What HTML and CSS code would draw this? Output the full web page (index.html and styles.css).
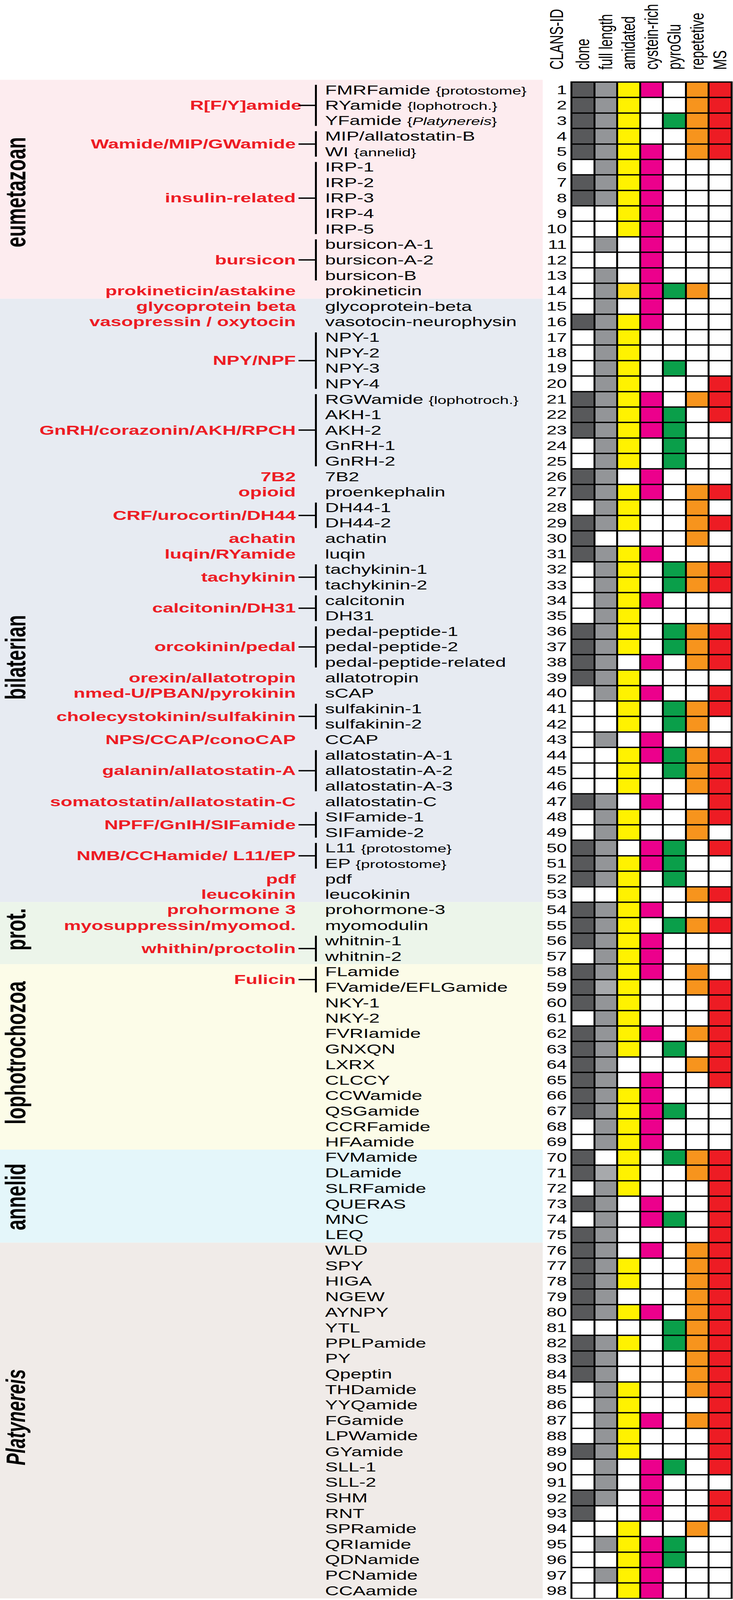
FILE: index.html
```html
<!DOCTYPE html>
<html lang="en">
<head>
<meta charset="utf-8">
<title>Neuropeptide families</title>
<link rel="stylesheet" href="styles.css">
</head>
<body>
<div class="page">
<div class="head">
  <div class="head-spacer"></div>
  <div class="hnum"><span class="vt">CLANS-ID</span></div>
  <div class="hcols">
    <div class="hcol"><span class="vt">clone</span></div>
    <div class="hcol"><span class="vt">full length</span></div>
    <div class="hcol"><span class="vt">amidated</span></div>
    <div class="hcol"><span class="vt">cystein-rich</span></div>
    <div class="hcol"><span class="vt">pyroGlu</span></div>
    <div class="hcol"><span class="vt">repetetive</span></div>
    <div class="hcol"><span class="vt">MS</span></div>
  </div>
</div>

<div class="main">
  <div class="left">
    <div class="band b-eu">
      <div class="group"><span>eumetazoan</span></div>
      <div class="fams">
        <div class="fam br"><div class="fl"><span class="over">R[F/Y]amide</span></div><div class="link"></div><div class="names">
          <div>FMRFamide <small class="an">{protostome}</small></div>
          <div>RYamide <small class="an">{lophotroch.}</small></div>
          <div>YFamide <small class="an">{<i>Platynereis</i>}</small></div>
        </div></div>
        <div class="fam br"><div class="fl">Wamide/MIP/GWamide</div><div class="link"></div><div class="names">
          <div>MIP/allatostatin-B</div>
          <div>WI <small class="an">{annelid}</small></div>
        </div></div>
        <div class="fam br"><div class="fl">insulin-related</div><div class="link"></div><div class="names">
          <div>IRP-1</div><div>IRP-2</div><div>IRP-3</div><div>IRP-4</div><div>IRP-5</div>
        </div></div>
        <div class="fam br"><div class="fl">bursicon</div><div class="link"></div><div class="names">
          <div>bursicon-A-1</div><div>bursicon-A-2</div><div>bursicon-B</div>
        </div></div>
        <div class="fam"><div class="fl">prokineticin/astakine</div><div class="link"></div><div class="names">
          <div>prokineticin</div>
        </div></div>
      </div>
    </div>

    <div class="band b-bi">
      <div class="group"><span>bilaterian</span></div>
      <div class="fams">
        <div class="fam"><div class="fl">glycoprotein beta</div><div class="link"></div><div class="names"><div>glycoprotein-beta</div></div></div>
        <div class="fam"><div class="fl">vasopressin / oxytocin</div><div class="link"></div><div class="names"><div>vasotocin-neurophysin</div></div></div>
        <div class="fam br"><div class="fl">NPY/NPF</div><div class="link"></div><div class="names">
          <div>NPY-1</div><div>NPY-2</div><div>NPY-3</div><div>NPY-4</div>
        </div></div>
        <div class="fam br"><div class="fl">GnRH/corazonin/AKH/RPCH</div><div class="link"></div><div class="names">
          <div>RGWamide <small class="an">{lophotroch.}</small></div><div>AKH-1</div><div>AKH-2</div><div>GnRH-1</div><div>GnRH-2</div>
        </div></div>
        <div class="fam"><div class="fl">7B2</div><div class="link"></div><div class="names"><div>7B2</div></div></div>
        <div class="fam"><div class="fl">opioid</div><div class="link"></div><div class="names"><div>proenkephalin</div></div></div>
        <div class="fam br"><div class="fl">CRF/urocortin/DH44</div><div class="link"></div><div class="names">
          <div>DH44-1</div><div>DH44-2</div>
        </div></div>
        <div class="fam"><div class="fl">achatin</div><div class="link"></div><div class="names"><div>achatin</div></div></div>
        <div class="fam"><div class="fl">luqin/RYamide</div><div class="link"></div><div class="names"><div>luqin</div></div></div>
        <div class="fam br"><div class="fl">tachykinin</div><div class="link"></div><div class="names">
          <div>tachykinin-1</div><div>tachykinin-2</div>
        </div></div>
        <div class="fam br"><div class="fl">calcitonin/DH31</div><div class="link"></div><div class="names">
          <div>calcitonin</div><div>DH31</div>
        </div></div>
        <div class="fam br"><div class="fl">orcokinin/pedal</div><div class="link"></div><div class="names">
          <div>pedal-peptide-1</div><div>pedal-peptide-2</div><div>pedal-peptide-related</div>
        </div></div>
        <div class="fam"><div class="fl">orexin/allatotropin</div><div class="link"></div><div class="names"><div>allatotropin</div></div></div>
        <div class="fam"><div class="fl">nmed-U/PBAN/pyrokinin</div><div class="link"></div><div class="names"><div>sCAP</div></div></div>
        <div class="fam br"><div class="fl">cholecystokinin/sulfakinin</div><div class="link"></div><div class="names">
          <div>sulfakinin-1</div><div>sulfakinin-2</div>
        </div></div>
        <div class="fam"><div class="fl">NPS/CCAP/conoCAP</div><div class="link"></div><div class="names"><div>CCAP</div></div></div>
        <div class="fam br"><div class="fl">galanin/allatostatin-A</div><div class="link"></div><div class="names">
          <div>allatostatin-A-1</div><div>allatostatin-A-2</div><div>allatostatin-A-3</div>
        </div></div>
        <div class="fam"><div class="fl">somatostatin/allatostatin-C</div><div class="link"></div><div class="names"><div>allatostatin-C</div></div></div>
        <div class="fam br"><div class="fl">NPFF/GnIH/SIFamide</div><div class="link"></div><div class="names">
          <div>SIFamide-1</div><div>SIFamide-2</div>
        </div></div>
        <div class="fam br"><div class="fl">NMB/CCHamide/ L11/EP</div><div class="link"></div><div class="names">
          <div>L11 <small class="an">{protostome}</small></div><div>EP <small class="an">{protostome}</small></div>
        </div></div>
        <div class="fam"><div class="fl">pdf</div><div class="link"></div><div class="names"><div>pdf</div></div></div>
        <div class="fam"><div class="fl">leucokinin</div><div class="link"></div><div class="names"><div>leucokinin</div></div></div>
      </div>
    </div>

    <div class="band b-pr">
      <div class="group"><span>prot.</span></div>
      <div class="fams">
        <div class="fam"><div class="fl">prohormone 3</div><div class="link"></div><div class="names"><div>prohormone-3</div></div></div>
        <div class="fam"><div class="fl">myosuppressin/myomod.</div><div class="link"></div><div class="names"><div>myomodulin</div></div></div>
        <div class="fam br"><div class="fl">whithin/proctolin</div><div class="link"></div><div class="names">
          <div>whitnin-1</div><div>whitnin-2</div>
        </div></div>
      </div>
    </div>

    <div class="band b-lo">
      <div class="group"><span>lophotrochozoa</span></div>
      <div class="fams">
        <div class="fam br"><div class="fl">Fulicin</div><div class="link"></div><div class="names">
          <div>FLamide</div><div>FVamide/EFLGamide</div>
        </div></div>
        <div class="fam"><div class="fl"></div><div class="link"></div><div class="names">
          <div>NKY-1</div><div>NKY-2</div><div>FVRIamide</div><div>GNXQN</div><div>LXRX</div><div>CLCCY</div><div>CCWamide</div><div>QSGamide</div><div>CCRFamide</div><div>HFAamide</div>
        </div></div>
      </div>
    </div>

    <div class="band b-an">
      <div class="group"><span>annelid</span></div>
      <div class="fams">
        <div class="fam"><div class="fl"></div><div class="link"></div><div class="names">
          <div>FVMamide</div><div>DLamide</div><div>SLRFamide</div><div>QUERAS</div><div>MNC</div><div>LEQ</div>
        </div></div>
      </div>
    </div>

    <div class="band b-pl">
      <div class="group"><span class="it">Platynereis</span></div>
      <div class="fams">
        <div class="fam"><div class="fl"></div><div class="link"></div><div class="names">
          <div>WLD</div><div>SPY</div><div>HIGA</div><div>NGEW</div><div>AYNPY</div><div>YTL</div><div>PPLPamide</div><div>PY</div><div>Qpeptin</div><div>THDamide</div><div>YYQamide</div><div>FGamide</div><div>LPWamide</div><div>GYamide</div><div>SLL-1</div><div>SLL-2</div><div>SHM</div><div>RNT</div><div>SPRamide</div><div>QRIamide</div><div>QDNamide</div><div>PCNamide</div><div>CCAamide</div>
        </div></div>
      </div>
    </div>
  </div>

  <div class="right">
    <div class="nums">
      <div>1</div><div>2</div><div>3</div><div>4</div><div>5</div><div>6</div><div>7</div><div>8</div><div>9</div><div>10</div>
      <div>11</div><div>12</div><div>13</div><div>14</div><div>15</div><div>16</div><div>17</div><div>18</div><div>19</div><div>20</div>
      <div>21</div><div>22</div><div>23</div><div>24</div><div>25</div><div>26</div><div>27</div><div>28</div><div>29</div><div>30</div>
      <div>31</div><div>32</div><div>33</div><div>34</div><div>35</div><div>36</div><div>37</div><div>38</div><div>39</div><div>40</div>
      <div>41</div><div>42</div><div>43</div><div>44</div><div>45</div><div>46</div><div>47</div><div>48</div><div>49</div><div>50</div>
      <div>51</div><div>52</div><div>53</div><div>54</div><div>55</div><div>56</div><div>57</div><div>58</div><div>59</div><div>60</div>
      <div>61</div><div>62</div><div>63</div><div>64</div><div>65</div><div>66</div><div>67</div><div>68</div><div>69</div><div>70</div>
      <div>71</div><div>72</div><div>73</div><div>74</div><div>75</div><div>76</div><div>77</div><div>78</div><div>79</div><div>80</div>
      <div>81</div><div>82</div><div>83</div><div>84</div><div>85</div><div>86</div><div>87</div><div>88</div><div>89</div><div>90</div>
      <div>91</div><div>92</div><div>93</div><div>94</div><div>95</div><div>96</div><div>97</div><div>98</div>
    </div>
    <div class="grid">
<i class="d"></i><i class="g"></i><i class="y"></i><i class="m"></i><i></i><i class="o"></i><i class="r"></i>
<i class="d"></i><i class="g"></i><i class="y"></i><i></i><i></i><i class="o"></i><i class="r"></i>
<i class="d"></i><i class="g"></i><i class="y"></i><i></i><i class="n"></i><i class="o"></i><i class="r"></i>
<i class="d"></i><i class="g"></i><i class="y"></i><i></i><i></i><i class="o"></i><i class="r"></i>
<i class="d"></i><i class="g"></i><i class="y"></i><i class="m"></i><i></i><i class="o"></i><i class="r"></i>
<i></i><i class="g"></i><i class="y"></i><i class="m"></i><i></i><i></i><i></i>
<i class="d"></i><i class="g"></i><i class="y"></i><i class="m"></i><i></i><i></i><i></i>
<i class="d"></i><i class="g"></i><i class="y"></i><i class="m"></i><i></i><i></i><i></i>
<i></i><i></i><i class="y"></i><i class="m"></i><i></i><i></i><i></i>
<i></i><i></i><i class="y"></i><i class="m"></i><i></i><i></i><i></i>
<i></i><i class="g"></i><i></i><i class="m"></i><i></i><i></i><i></i>
<i></i><i></i><i></i><i class="m"></i><i></i><i></i><i></i>
<i></i><i class="g"></i><i></i><i class="m"></i><i></i><i></i><i></i>
<i></i><i class="g"></i><i class="y2"></i><i class="m"></i><i class="n"></i><i class="o"></i><i></i>
<i></i><i class="g"></i><i></i><i class="m"></i><i></i><i></i><i></i>
<i class="d"></i><i class="g"></i><i class="y"></i><i class="m"></i><i></i><i></i><i></i>
<i></i><i class="g"></i><i class="y"></i><i></i><i></i><i></i><i></i>
<i></i><i class="g"></i><i class="y"></i><i></i><i></i><i></i><i></i>
<i></i><i class="g"></i><i class="y"></i><i></i><i class="n"></i><i></i><i></i>
<i></i><i class="g"></i><i class="y"></i><i></i><i></i><i></i><i class="r"></i>
<i class="d"></i><i class="g"></i><i class="y"></i><i class="m"></i><i></i><i class="o"></i><i class="r"></i>
<i class="d"></i><i class="g"></i><i class="y"></i><i class="m"></i><i class="n"></i><i></i><i class="r"></i>
<i class="d"></i><i class="g"></i><i class="y"></i><i class="m"></i><i class="n"></i><i></i><i></i>
<i></i><i class="g"></i><i class="y"></i><i></i><i class="n"></i><i></i><i></i>
<i></i><i class="g"></i><i class="y"></i><i></i><i class="n"></i><i></i><i></i>
<i class="d"></i><i class="g"></i><i></i><i class="m"></i><i></i><i></i><i></i>
<i class="d"></i><i class="g"></i><i class="y"></i><i class="m"></i><i></i><i class="o"></i><i class="r"></i>
<i></i><i class="g"></i><i class="y"></i><i></i><i></i><i class="o"></i><i></i>
<i class="d"></i><i class="g"></i><i class="y"></i><i></i><i></i><i class="o"></i><i class="r"></i>
<i class="d"></i><i></i><i></i><i></i><i></i><i class="o"></i><i></i>
<i class="d"></i><i class="g"></i><i class="y"></i><i class="m"></i><i></i><i></i><i></i>
<i></i><i class="g"></i><i class="y"></i><i></i><i class="n"></i><i class="o"></i><i class="r"></i>
<i></i><i class="g"></i><i class="y"></i><i></i><i class="n"></i><i class="o"></i><i class="r"></i>
<i></i><i class="g"></i><i class="y"></i><i class="m"></i><i></i><i></i><i></i>
<i></i><i class="g"></i><i class="y"></i><i></i><i></i><i></i><i></i>
<i class="d"></i><i class="g"></i><i class="y"></i><i></i><i class="n"></i><i class="o"></i><i class="r"></i>
<i class="d"></i><i class="g"></i><i class="y"></i><i></i><i class="n"></i><i class="o"></i><i class="r"></i>
<i class="d"></i><i class="g"></i><i></i><i class="m"></i><i></i><i class="o"></i><i class="r"></i>
<i class="d"></i><i class="g"></i><i class="y"></i><i></i><i></i><i></i><i></i>
<i></i><i class="g"></i><i class="y"></i><i class="m"></i><i></i><i></i><i class="r"></i>
<i></i><i></i><i class="y"></i><i></i><i class="n"></i><i class="o"></i><i class="r"></i>
<i></i><i></i><i class="y"></i><i></i><i class="n"></i><i class="o"></i><i></i>
<i></i><i class="g"></i><i></i><i class="m"></i><i></i><i></i><i></i>
<i></i><i></i><i class="y"></i><i class="m"></i><i class="n"></i><i class="o"></i><i class="r"></i>
<i></i><i></i><i class="y"></i><i></i><i class="n"></i><i class="o"></i><i class="r"></i>
<i></i><i></i><i class="y"></i><i></i><i></i><i class="o"></i><i class="r"></i>
<i class="d"></i><i class="g"></i><i></i><i class="m"></i><i></i><i></i><i class="r"></i>
<i></i><i class="g"></i><i class="y"></i><i></i><i></i><i class="o"></i><i class="r"></i>
<i></i><i class="g"></i><i class="y"></i><i></i><i></i><i class="o"></i><i></i>
<i class="d"></i><i class="g"></i><i></i><i class="m"></i><i class="n"></i><i></i><i class="r"></i>
<i class="d"></i><i class="g"></i><i class="y"></i><i class="m"></i><i class="n"></i><i></i><i></i>
<i class="d"></i><i class="g"></i><i class="y"></i><i></i><i class="n"></i><i></i><i></i>
<i></i><i></i><i class="y"></i><i></i><i></i><i class="o"></i><i class="r"></i>
<i class="d"></i><i class="g"></i><i class="y"></i><i class="m"></i><i></i><i></i><i></i>
<i class="d"></i><i class="g"></i><i class="y"></i><i></i><i class="n"></i><i class="o"></i><i class="r"></i>
<i class="d"></i><i class="g"></i><i class="y"></i><i class="m"></i><i></i><i></i><i></i>
<i></i><i class="g"></i><i class="y"></i><i class="m"></i><i></i><i></i><i></i>
<i class="d"></i><i class="g"></i><i class="y"></i><i class="m"></i><i></i><i class="o"></i><i></i>
<i class="d"></i><i class="g2"></i><i class="y"></i><i></i><i></i><i class="o"></i><i class="r"></i>
<i class="d"></i><i class="g"></i><i class="y"></i><i></i><i></i><i></i><i class="r"></i>
<i></i><i class="g"></i><i class="y"></i><i></i><i></i><i></i><i class="r"></i>
<i class="d"></i><i class="g"></i><i class="y"></i><i class="m"></i><i></i><i class="o"></i><i class="r"></i>
<i class="d"></i><i class="g"></i><i class="y"></i><i></i><i class="n"></i><i></i><i class="r"></i>
<i class="d"></i><i class="g"></i><i></i><i></i><i></i><i class="o"></i><i class="r"></i>
<i class="d"></i><i class="g"></i><i></i><i class="m"></i><i></i><i></i><i class="r"></i>
<i class="d"></i><i class="g"></i><i class="y"></i><i class="m"></i><i></i><i></i><i></i>
<i class="d"></i><i class="g"></i><i class="y"></i><i class="m"></i><i class="n"></i><i></i><i></i>
<i></i><i class="g"></i><i class="y"></i><i class="m"></i><i></i><i></i><i></i>
<i></i><i class="g"></i><i class="y"></i><i class="m"></i><i></i><i></i><i></i>
<i class="d"></i><i></i><i class="y"></i><i></i><i class="n"></i><i class="o"></i><i class="r"></i>
<i class="d"></i><i class="g2"></i><i class="y"></i><i></i><i></i><i class="o"></i><i class="r"></i>
<i></i><i class="g"></i><i class="y"></i><i></i><i></i><i></i><i class="r"></i>
<i class="d"></i><i class="g"></i><i></i><i class="m"></i><i></i><i></i><i class="r"></i>
<i></i><i class="g"></i><i></i><i class="m"></i><i class="n"></i><i></i><i class="r"></i>
<i class="d"></i><i class="g"></i><i></i><i></i><i></i><i></i><i class="r"></i>
<i class="d"></i><i class="g"></i><i></i><i class="m"></i><i></i><i class="o"></i><i class="r"></i>
<i class="d"></i><i class="g"></i><i class="y"></i><i></i><i></i><i class="o"></i><i class="r"></i>
<i class="d"></i><i class="g"></i><i class="y"></i><i></i><i></i><i class="o"></i><i class="r"></i>
<i class="d"></i><i class="g"></i><i></i><i></i><i></i><i class="o"></i><i class="r"></i>
<i class="d"></i><i class="g"></i><i class="y"></i><i class="m"></i><i></i><i class="o"></i><i class="r"></i>
<i></i><i></i><i></i><i></i><i class="n"></i><i class="o"></i><i class="r"></i>
<i class="d"></i><i class="g"></i><i class="y"></i><i></i><i class="n"></i><i class="o"></i><i class="r"></i>
<i class="d"></i><i class="g"></i><i></i><i></i><i></i><i class="o"></i><i class="r"></i>
<i class="d"></i><i class="g"></i><i></i><i></i><i></i><i class="o"></i><i class="r"></i>
<i></i><i class="g"></i><i class="y"></i><i></i><i></i><i class="o"></i><i class="r"></i>
<i></i><i class="g"></i><i class="y"></i><i></i><i></i><i></i><i class="r"></i>
<i></i><i class="g"></i><i class="y"></i><i class="m"></i><i></i><i class="o"></i><i class="r"></i>
<i></i><i class="g"></i><i class="y"></i><i></i><i></i><i></i><i class="r"></i>
<i class="d"></i><i class="g"></i><i class="y"></i><i></i><i></i><i></i><i class="r"></i>
<i></i><i class="g"></i><i></i><i class="m"></i><i class="n"></i><i></i><i class="r"></i>
<i></i><i class="g"></i><i></i><i class="m"></i><i></i><i></i><i></i>
<i class="d"></i><i class="g"></i><i></i><i class="m"></i><i></i><i></i><i class="r"></i>
<i class="d"></i><i></i><i></i><i class="m"></i><i></i><i></i><i class="r"></i>
<i></i><i></i><i class="y"></i><i></i><i></i><i class="o"></i><i></i>
<i></i><i class="g"></i><i class="y"></i><i class="m"></i><i class="n"></i><i></i><i></i>
<i></i><i></i><i class="y"></i><i class="m"></i><i class="n"></i><i></i><i></i>
<i></i><i class="g"></i><i class="y"></i><i class="m"></i><i></i><i></i><i></i>
<i></i><i></i><i class="y"></i><i class="m"></i><i></i><i></i><i></i>
    </div>
  </div>
</div>
</div>
<script src="fit.js"></script>
</body>
</html>
```

FILE: styles.css
```css
html {
  overflow: hidden;
  background: #ffffff;
}

html, body {
  margin: 0;
  padding: 0;
}

/* The figure is drawn at 1876 x 6036; --fit (set by fit.js from the
   window height) squeezes it vertically when the window is shorter. */
body {
  width: 1876px;
  height: calc(6032px * var(--fit, 1));
  overflow: hidden;
  background: #ffffff;
}

.page {
  width: 1876px;
  height: 6032px;
  overflow: hidden;
  color: #000000;
  font-family: "Liberation Sans", Arial, sans-serif;
  transform: scaleY(var(--fit, 1));
  transform-origin: 0 0;
}

/* ---------- header with rotated column titles ---------- */
.head {
  display: flex;
  height: 301px;
}

.head-spacer {
  width: 1389px;
  flex: none;
}

.hnum,
.hcol {
  display: flex;
  justify-content: center;
  align-items: flex-end;
  height: 301px;
  padding-bottom: 38px;
  box-sizing: border-box;
  flex: none;
}

.hnum {
  width: 71px;
}

.hcols {
  display: flex;
  padding-left: 2.5px;
}

.hcol {
  width: 58.5px;
}

.vt {
  writing-mode: vertical-rl;
  transform: rotate(180deg);
  font-size: 49px;
  line-height: 49px;
  white-space: nowrap;
}

/* ---------- main body ---------- */
.main {
  display: flex;
  align-items: flex-start;
}

.left {
  width: 1389px;
  flex: none;
}

.band {
  display: flex;
}

.b-eu { background: #fdecef; padding-top: 8.5px; }
.b-bi { background: #e7ebf2; }
.b-pr { background: #ecf5ea; }
.b-lo { background: #fcfce8; }
.b-an { background: #e4f6fa; }
.b-pl { background: #f0ebe8; }

.group {
  width: 100px;
  flex: none;
  display: flex;
  flex-direction: column;
  justify-content: flex-end;
  align-items: flex-start;
  padding-left: 4px;
  box-sizing: border-box;
}

.group span {
  writing-mode: vertical-rl;
  transform: rotate(180deg);
  font-size: 72px;
  line-height: 72px;
  font-weight: bold;
  white-space: nowrap;
}

.group .it {
  font-style: italic;
  font-size: 68px;
}

.b-eu .group { padding-bottom: 194px; }
.b-bi .group { padding-bottom: 763px; }
.b-pr .group { padding-bottom: 51px; }
.b-lo .group { padding-bottom: 95px; }
.b-an .group { padding-bottom: 47px; }
.b-pl .group { padding-bottom: 502px; }

.fams {
  flex: 1;
}

.fam {
  display: flex;
  align-items: center;
}

.fl {
  width: 657px;
  flex: none;
  text-align: right;
  color: #ed1c24;
  font-weight: bold;
  font-size: 49px;
  line-height: 58.375px;
  white-space: nowrap;
}

.fl .over {
  display: inline-block;
  margin-right: -15px;
}

.link {
  width: 42px;
  height: 5px;
  margin-left: 7px;
  flex: none;
}

.br .link {
  background: #000000;
}

.names {
  position: relative;
  padding-left: 26px;
  font-size: 49px;
}

.br .names::before {
  content: "";
  position: absolute;
  left: 0;
  top: 10px;
  bottom: 10px;
  width: 5px;
  background: #000000;
}

.names div {
  height: 58.375px;
  line-height: 58.375px;
  white-space: nowrap;
}

.an {
  font-size: 41px;
}

/* ---------- numbers and the property grid ---------- */
.right {
  display: flex;
  align-items: flex-start;
}

.nums {
  width: 71px;
  flex: none;
  padding-top: 8.5px;
  box-sizing: border-box;
}

.nums div {
  height: 58.375px;
  line-height: 58.375px;
  text-align: right;
  padding-right: 9px;
  font-size: 47px;
}

.grid {
  margin-top: 6px;
  display: grid;
  grid-template-columns: repeat(7, 53.5px);
  grid-auto-rows: 53.375px;
  gap: 5px;
  padding: 5px;
  background: #000000;
}

.grid i {
  display: block;
  background: #ffffff;
}

.grid .d  { background: #58595b; }
.grid .g  { background: #939598; }
.grid .g2 { background: #a7a9ac; }
.grid .y  { background: #fff200; }
.grid .y2 { background: #ffde17; }
.grid .m  { background: #ec008c; }
.grid .n  { background: #0a9f4a; }
.grid .o  { background: #f7941d; }
.grid .r  { background: #ed1c24; }
```

FILE: fit.js
```js
(function () {
  function fit() {
    var s = window.innerHeight / 6036;
    if (s > 1 || !isFinite(s) || s <= 0) s = 1;
    document.documentElement.style.setProperty('--fit', String(s));
  }
  fit();
  window.addEventListener('resize', fit);
})();
```
